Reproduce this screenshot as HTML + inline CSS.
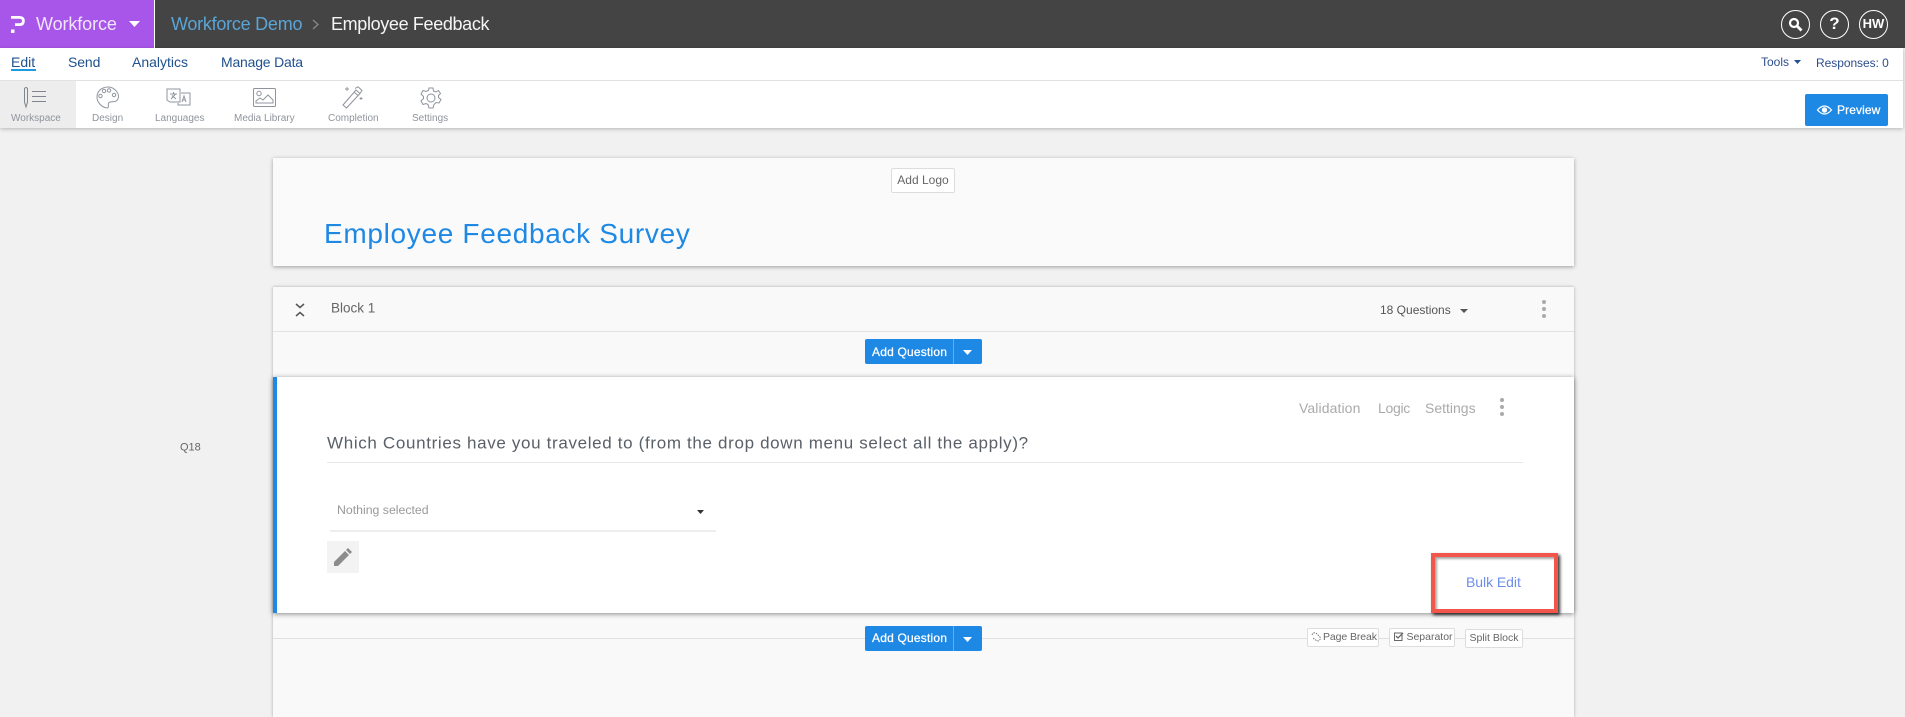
<!DOCTYPE html>
<html><head><meta charset="utf-8"><title>Employee Feedback</title>
<style>
html,body{margin:0;padding:0;width:1905px;height:706px;overflow:hidden;background:#f1f1f1;font-family:"Liberation Sans",sans-serif}
.a{position:absolute;box-sizing:border-box}
.t{position:absolute;white-space:nowrap;line-height:1;transform:translateY(-50%)}
svg{position:absolute;overflow:visible}
.lb{font-size:10px;color:#8f949c;top:119px}
.nav{font-size:14px;color:#21518f;top:62px}
.btn{background:#1e88e5;border-radius:2px}
.sm{background:#fff;border:1px solid #ddd;border-radius:2px;font-size:10.5px;color:#666;text-align:center}
.circ{width:29px;height:29px;border:1.5px solid #fff;border-radius:50%;top:10px;color:#fff;font-weight:bold;text-align:center}
.dot{width:4px;height:4px;border-radius:50%;background:#aaa}
.aq{font-size:12px;letter-spacing:.2px;-webkit-text-stroke:.25px #fff;color:#fff}
</style></head><body>
<div class="a" style="left:0;top:0;width:1905px;height:48px;background:#444"></div>
<div class="a" style="left:0;top:0;width:154px;height:48px;background:#a855ea"></div>
<div class="a" style="left:154px;top:0;width:1px;height:48px;background:#fff"></div>
<svg style="left:10px;top:14px" width="16" height="21" viewBox="0 0 16 21"><path d="M1 3.400H9.500Q13.400 3.400 13.400 7T9.500 10.600H5" fill="none" stroke="#fff" stroke-width="2.800"/><rect x="1" y="15.500" width="3.500" height="3.500" fill="#fff"/></svg>
<div class="t" style="left:36px;top:24px;font-size:18px;letter-spacing:-.1px;color:#f0e6fb">Workforce</div>
<svg style="left:129px;top:21px" width="11" height="6"><path d="M0 0H11L5.500 6Z" fill="#fff"/></svg>
<div class="t" style="left:171px;top:24px;font-size:18px;letter-spacing:-.25px;color:#5aa5d6">Workforce Demo</div>
<svg style="left:312px;top:19px" width="7" height="11"><path d="M1 1L6 5.500L1 10" fill="none" stroke="#888" stroke-width="1.300"/></svg>
<div class="t" style="left:331px;top:24px;font-size:18px;letter-spacing:-.35px;color:#f5f5f5">Employee Feedback</div>
<div class="a circ" style="left:1781px"></div>
<svg style="left:1788px;top:17px" width="15" height="15" viewBox="0 0 15 15"><circle cx="6" cy="6" r="4" fill="none" stroke="#fff" stroke-width="2.200"/><path d="M9 9L13.500 13.500" stroke="#fff" stroke-width="2.800"/></svg>
<div class="a circ" style="left:1820px;font-size:17px;line-height:26px">?</div>
<div class="a circ" style="left:1859px;font-size:13px;line-height:26px">HW</div>

<div class="a" style="left:0;top:48px;width:1903px;height:80px;background:#fff;box-shadow:0 1px 4px rgba(0,0,0,.25)"></div>
<div class="a" style="left:0;top:80px;width:1903px;height:1px;background:#e2e2e2"></div>
<div class="t nav" style="left:11px">Edit</div>
<div class="a" style="left:11px;top:69px;width:25px;height:2px;background:#1e9be0"></div>
<div class="t nav" style="left:68px;letter-spacing:-.1px">Send</div>
<div class="t nav" style="left:132px">Analytics</div>
<div class="t nav" style="left:221px;letter-spacing:-.2px">Manage Data</div>
<div class="t" style="left:1761px;top:62px;font-size:12px;color:#2c4e8e">Tools</div>
<svg style="left:1794px;top:60px" width="7" height="4"><path d="M0 0H7L3.500 4Z" fill="#21518f"/></svg>
<div class="t" style="left:1816px;top:63px;font-size:12px;letter-spacing:-.05px;color:#2c4e8e">Responses: 0</div>

<div class="a" style="left:0;top:81px;width:76px;height:47px;background:#ededed"></div>
<svg style="left:22px;top:86px" width="26" height="22" viewBox="0 0 26 22" fill="none" stroke="#7f848e" stroke-width="1"><path d="M2.500 2.500Q4 .5 5.500 2.500V16L4 21L2.500 16Z"/><path d="M10 5.500H24M10 10.500H24M10 15.500H24"/></svg>
<svg style="left:96px;top:86px" width="24" height="23" viewBox="0 0 24 23" fill="none" stroke="#8f949c" stroke-width="1"><path d="M12 1C5 1 1 6 1 11S5 21 11 22C14 22 11 18 13 16.500C15 15 20 17 22 13C24 8 19 1 12 1Z"/><circle cx="4.500" cy="10" r="1.700"/><circle cx="8" cy="5" r="1.700"/><circle cx="13" cy="4.500" r="1.700"/><circle cx="18" cy="9" r="1.700"/></svg>
<svg style="left:166px;top:88px" width="25" height="19" viewBox="0 0 25 19" fill="none" stroke="#8f949c" stroke-width="1"><path d="M1 1H14V14H4L1 12Z"/><path d="M15 5H24V17H12V15"/><path d="M4 6H11M7.500 4V6M5 11L9.500 6M6 7.500L10 11"/><path d="M16 14L18 8L20 14M16.800 12H19.200"/></svg>
<svg style="left:253px;top:88px" width="23" height="19" viewBox="0 0 23 19" fill="none" stroke="#8f949c" stroke-width="1"><rect x=".5" y=".5" width="22" height="18" rx="1"/><circle cx="6" cy="5.500" r="2.200"/><path d="M3 15V13L7 10L10 12L15 7L20 12V15Z"/></svg>
<svg style="left:342px;top:86px" width="22" height="23" viewBox="0 0 22 23" fill="none" stroke="#8f949c" stroke-width="1"><path d="M1 19L14 4L18 7.500L4.500 22Z"/><path d="M13 2.500L16 .8L20 4.500L18 7.500M12 6L16 9.500"/><path d="M5 1V5M3 3H7M19 11V14M17.500 12.500H20.500" stroke-width=".9"/></svg>
<svg style="left:420px;top:87px" width="22" height="22" viewBox="0 0 22 22" fill="none" stroke="#8f949c" stroke-width="1"><circle cx="11" cy="11" r="4"/><path d="M9 1H13L13.500 4L16 5L18.500 3.500L20.500 6.500L18.500 8.500V10.500L21 12.500L19 16L16 15.500L14 17.500L13 21H9L8 17.500L6 16.500L3 17.500L1 14L3.500 11.500V9.500L1 7L3 3.500L6 4.500L8.500 3.500Z"/></svg>
<div class="t lb" style="left:11px">Workspace</div>
<div class="t lb" style="left:92px">Design</div>
<div class="t lb" style="left:155px">Languages</div>
<div class="t lb" style="left:234px">Media Library</div>
<div class="t lb" style="left:328px">Completion</div>
<div class="t lb" style="left:412px">Settings</div>

<div class="a btn" style="left:1805px;top:94px;width:83px;height:32px"></div>
<svg style="left:1817px;top:105px" width="15" height="10" viewBox="0 0 15 10"><path d="M.5 5Q7.500-3 14.500 5Q7.500 13 .5 5Z" fill="none" stroke="#fff" stroke-width="1.200"/><circle cx="7.500" cy="5" r="2.700" fill="#fff"/></svg>
<div class="t aq" style="left:1837px;top:110px;font-size:12px;letter-spacing:.1px">Preview</div>

<div class="a" style="left:273px;top:158px;width:1301px;height:108px;background:#fafafa;box-shadow:0 1px 4px rgba(0,0,0,.35)"></div>
<div class="a sm" style="left:891px;top:168px;width:64px;height:25px;font-size:12px;line-height:23px">Add Logo</div>
<div class="t" style="left:324px;top:234px;font-size:28px;letter-spacing:.68px;color:#1e88e5">Employee Feedback Survey</div>

<div class="a" style="left:273px;top:287px;width:1301px;height:430px;background:#f9f9f9;box-shadow:0 0 3px rgba(0,0,0,.3)"></div>
<div class="a" style="left:273px;top:331px;width:1301px;height:1px;background:#e2e2e2"></div>
<svg style="left:295px;top:303px" width="10" height="14" viewBox="0 0 10 14" fill="none" stroke="#555" stroke-width="1.500"><path d="M1 1L5 4.500L9 1M1 13L5 9.500L9 13"/></svg>
<div class="t" style="left:331px;top:308px;font-size:13.500px;color:#666">Block 1</div>
<div class="t" style="left:1380px;top:310px;font-size:12px;color:#555">18 Questions</div>
<svg style="left:1460px;top:309px" width="8" height="4"><path d="M0 0H8L4 4Z" fill="#555"/></svg>
<div class="a dot" style="left:1542px;top:300px"></div><div class="a dot" style="left:1542px;top:307px"></div><div class="a dot" style="left:1542px;top:314px"></div>

<div class="a btn" style="left:865px;top:339px;width:117px;height:25px"></div>
<div class="a" style="left:953px;top:339px;width:1px;height:25px;background:#62aef0"></div>
<div class="t aq" style="left:872px;top:352px">Add Question</div>
<svg style="left:963px;top:350px" width="9" height="5"><path d="M0 0H9L4.500 5Z" fill="#fff"/></svg>

<div class="a" style="left:273px;top:377px;width:1301px;height:236px;background:#fff;box-shadow:0 1px 5px rgba(0,0,0,.45)"></div>
<div class="a" style="left:273px;top:377px;width:4px;height:236px;background:#1e88e5"></div>
<div class="t" style="left:1299px;top:408px;font-size:14px;letter-spacing:.1px;color:#aaa">Validation</div>
<div class="t" style="left:1378px;top:408px;font-size:14px;letter-spacing:-.3px;color:#aaa">Logic</div>
<div class="t" style="left:1425px;top:408px;font-size:14px;color:#aaa">Settings</div>
<div class="a dot" style="left:1500px;top:398px"></div><div class="a dot" style="left:1500px;top:405px"></div><div class="a dot" style="left:1500px;top:412px"></div>
<div class="t" style="left:180px;top:448px;font-size:11px;color:#666">Q18</div>
<div class="t" style="left:327px;top:443px;font-size:17px;letter-spacing:.66px;color:#5a6068">Which Countries have you traveled to (from the drop down menu select all the apply)?</div>
<div class="a" style="left:327px;top:462px;width:1196px;height:1px;background:#e8e8e8"></div>
<div class="t" style="left:337px;top:510px;font-size:12.300px;color:#999">Nothing selected</div>
<svg style="left:697px;top:510px" width="7" height="4"><path d="M0 0H7L3.500 4Z" fill="#333"/></svg>
<div class="a" style="left:330px;top:530px;width:386px;height:2px;background:#eee"></div>
<div class="a" style="left:327px;top:541px;width:32px;height:32px;background:#f3f3f3"></div>
<svg style="left:334px;top:548px" width="18" height="18" viewBox="0 0 18 18"><path d="M0 18V14L11 3L15 7L4 18ZM12 2L14 0L18 4L16 6Z" fill="#8c8c8c"/></svg>

<div class="a" style="left:1431px;top:553px;width:127px;height:60px;border:4px solid #f2564a;box-shadow:2px 2px 3px rgba(0,0,0,.8),inset 2px 2px 2px rgba(0,0,0,.35)"></div>
<div class="t" style="left:1466px;top:582px;font-size:14px;letter-spacing:-.05px;color:#6d8fe8">Bulk Edit</div>

<div class="a" style="left:273px;top:638px;width:1301px;height:1px;background:#e0e0e0"></div>
<div class="a btn" style="left:865px;top:626px;width:117px;height:25px"></div>
<div class="a" style="left:953px;top:626px;width:1px;height:25px;background:#62aef0"></div>
<div class="t aq" style="left:872px;top:638px">Add Question</div>
<svg style="left:963px;top:637px" width="9" height="5"><path d="M0 0H9L4.500 5Z" fill="#fff"/></svg>
<div class="a sm" style="left:1307px;top:628px;width:72px;height:19px;line-height:17px;padding-left:15px;font-size:10.500px;letter-spacing:-.1px;text-align:left">Page Break</div>
<svg style="left:1311px;top:632px" width="10" height="10" viewBox="0 0 10 10" fill="none" stroke="#777" stroke-dasharray="1.500 1"><path d="M1 3Q2 0 5 1L9 5Q10 9 6 9L2 6"/></svg>
<div class="a sm" style="left:1389px;top:628px;width:66px;height:19px;line-height:17px;padding-left:15px">Separator</div>
<svg style="left:1394px;top:632px" width="10" height="9" viewBox="0 0 10 9" fill="none" stroke="#666"><rect x=".5" y="1" width="7.500" height="7.500"/><path d="M2 4L4 6L9 1" stroke-width="1.300"/></svg>
<div class="a sm" style="left:1465px;top:629px;width:58px;height:19px;line-height:17px">Split Block</div>
</body></html>
